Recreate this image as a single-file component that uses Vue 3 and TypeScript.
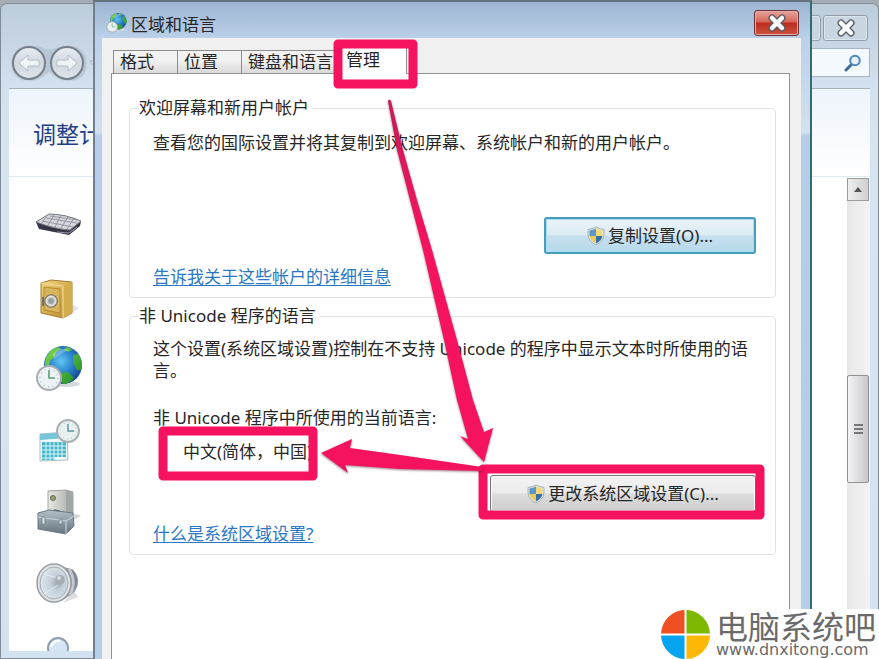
<script setup lang="ts">
import { ref } from 'vue'

const tabs = ['格式', '位置', '键盘和语言', '管理']
const activeTab = ref('管理')
const search = ref('')
const shortcuts = [
  { id: 'keyboard', label: '键盘' },
  { id: 'safe', label: '凭据管理器' },
  { id: 'region', label: '区域和语言' },
  { id: 'calendar', label: '日期和时间' },
  { id: 'device', label: '设备管理器' },
  { id: 'speaker', label: '声音' },
  { id: 'more', label: '更多' },
]
</script>

<template>
  <main class="desktop">
    <svg class="defs" width="0" height="0" aria-hidden="true">
      <defs>
        <radialGradient id="ocean" cx=".45" cy=".4" r=".65">
          <stop offset="0" stop-color="#5fc8f2" />
          <stop offset=".5" stop-color="#2a7fcb" />
          <stop offset="1" stop-color="#123f86" />
        </radialGradient>
        <linearGradient id="land" x1="0" y1="0" x2="1" y2="1">
          <stop offset="0" stop-color="#7fd84a" />
          <stop offset="1" stop-color="#1f8a2c" />
        </linearGradient>
        <linearGradient id="gold" x1="0" y1="0" x2="1" y2="1">
          <stop offset="0" stop-color="#f0d47c" />
          <stop offset="1" stop-color="#b98a28" />
        </linearGradient>
        <linearGradient id="steel" x1="0" y1="0" x2="0" y2="1">
          <stop offset="0" stop-color="#b3bfc7" />
          <stop offset="1" stop-color="#66757f" />
        </linearGradient>
        <linearGradient id="tower" x1="0" y1="0" x2="1" y2="0">
          <stop offset="0" stop-color="#e9e9e4" />
          <stop offset="1" stop-color="#a5a8a6" />
        </linearGradient>
        <radialGradient id="cone" cx=".62" cy=".5" r=".6">
          <stop offset="0" stop-color="#9aa5ad" />
          <stop offset=".4" stop-color="#c3d0da" />
          <stop offset="1" stop-color="#dbe5ec" />
        </radialGradient>
        <linearGradient id="shaft" x1="0" y1="0" x2="0" y2="1">
          <stop offset="0" stop-color="#c81c58" />
          <stop offset=".4" stop-color="#f5125f" />
        </linearGradient>
        <symbol id="globe" viewBox="0 0 48 48">
          <ellipse cx="30" cy="40" rx="15" ry="3" fill="#d5d8db" />
          <circle cx="28" cy="21" r="19" fill="url(#ocean)" />
          <path d="M10 19C11 10 16 5 23 3L26 5 21 8 20 12 15 17 14 24 10 25ZM31 3L37 5 34 8 29 6ZM38 11L43 10C47 15 48 22 46 26L42 26 38 19ZM26 29L33 28 39 34C36 38 32 40 28 40L24 34Z" fill="url(#land)" />
          <path d="M17 10Q25 2 35 6Q28 8 19 15Z" fill="#fff" opacity=".25" />
          <circle cx="14" cy="34" r="12" fill="#edf2f4" stroke="#a6afb5" stroke-width="2" />
          <circle cx="14" cy="34" r="9" fill="none" stroke="#b8c0c5" stroke-width="1.5" stroke-dasharray="1 3.7" />
          <path d="M14 26V34H20" fill="none" stroke="#58a179" stroke-width="1.6" />
        </symbol>
        <symbol id="shield" viewBox="0 0 18 20">
          <path d="M9 1Q5 3 1 3.5V9Q2 16 9 19Q16 16 17 9V3.5Q13 3 9 1Z" fill="#dfe6e6" stroke="#a8b2b5" />
          <path d="M9 2.500Q6 4 2.500 4.500V10H9Z" fill="#5b97c9" />
          <path d="M9 2.500Q12 4 15.500 4.500V10H9Z" fill="#f4d978" />
          <path d="M2.500 10H9V17.500Q3.500 15 2.500 10Z" fill="#eccb5c" />
          <path d="M9 10H15.500Q14.500 15 9 17.500Z" fill="#3a6fa4" />
        </symbol>
        <symbol id="cross" viewBox="0 0 20 18">
          <path d="M5 4L15 14M15 4L5 14" stroke="#575b63" stroke-width="7" stroke-linecap="round" />
          <path d="M5 4L15 14M15 4L5 14" stroke="#fafafa" stroke-width="4.500" stroke-linecap="round" />
        </symbol>
      </defs>
    </svg>

    <section class="panel-window" aria-label="控制面板">
      <header class="panel-header">
        <nav class="history">
          <svg class="history-tray" viewBox="0 0 88 40" aria-hidden="true">
            <path d="M1 21Q2 2 20 2Q29 2 35 5Q39 7 45 5Q51 2 59 2Q76 3 77 21Q76 38 59 38Q49 38 39 29Q29 38 20 38Q2 38 1 21Z" fill="#b7c6d5" stroke="#c9d6e2" />
            <path d="M80 18H88L84 23Z" fill="#e9eff4" stroke="#a6b1bd" />
          </svg>
          <button class="round" type="button" aria-label="后退">
            <svg viewBox="0 0 24 20"><path d="M2 10L11 2V7H22V13H11V18Z" fill="#f0f3f6" stroke="#b5bcc4" /></svg>
          </button>
          <button class="round" type="button" aria-label="前进">
            <svg viewBox="0 0 24 20"><path d="M22 10L13 2V7H2V13H13V18Z" fill="#f0f3f6" stroke="#b5bcc4" /></svg>
          </button>
        </nav>
        <div class="panel-tools">
          <div class="caption">
            <button type="button" aria-label="最大化"></button>
            <button type="button" aria-label="关闭控制面板"><svg viewBox="0 0 20 18"><use href="#cross" /></svg></button>
          </div>
          <label class="search">
            <input v-model="search" type="search" aria-label="搜索控制面板" />
            <svg viewBox="0 0 18 18" aria-hidden="true">
              <path d="M2 16L8 10" stroke="#3f699f" stroke-width="3" stroke-linecap="round" />
              <circle cx="11" cy="6.500" r="4.800" fill="#e4f0fa" stroke="#4d87bd" stroke-width="2" />
            </svg>
          </label>
        </div>
      </header>
      <div class="panel-client">
        <h1>调整计</h1>
        <div class="panel-body">
          <ul class="shortcuts">
            <li v-for="item in shortcuts" :key="item.id">
              <button type="button" :aria-label="item.label">
                <svg v-if="item.id === 'keyboard'" viewBox="0 0 48 48">
                  <path d="M1 22L14 14Q30 14 46 21L45 26 34 35 4 29Z" fill="#353844" />
                  <path d="M1 22L14 14Q30 14 46 21L35 30Q20 29 1 22Z" fill="#d3d6da" stroke="#7b7f87" />
                  <path d="M7 21L38 27M11 18L42 23M15 16L43 20M12 15L7 23M19 15L13 25M26 15L20 27M33 17L26 28M39 18L32 29" stroke="#868b94" stroke-width=".8" fill="none" />
                  <path d="M22 32L34 33 42 27" stroke="#9296b8" fill="none" />
                </svg>
                <svg v-else-if="item.id === 'safe'" viewBox="0 0 48 48">
                  <path d="M35 42L44 36 38 33Z" fill="#e3e3e3" />
                  <path d="M6 11L16 8 37 10 37 41 28 46 6 41Z" fill="url(#gold)" stroke="#a57d2a" />
                  <path d="M28 14L37 10V41L28 46Z" fill="#d3ad4c" />
                  <path d="M6 11L28 14V46" fill="none" stroke="#f5dfa0" />
                  <path d="M9 15L25 17V41L9 38Z" fill="#d8b55a" stroke="#b68b30" />
                  <circle cx="16" cy="29" r="7" fill="#898372" />
                  <circle cx="16" cy="29" r="5" fill="#cfd2d1" stroke="#f1eee0" />
                  <circle cx="16" cy="29" r="3" fill="#9aa0a2" />
                  <path d="M8 25V34" stroke="#767263" stroke-width="2" />
                </svg>
                <svg v-else-if="item.id === 'region'" viewBox="0 0 48 48"><use href="#globe" /></svg>
                <svg v-else-if="item.id === 'calendar'" viewBox="0 0 48 48">
                  <path d="M5 18L32 16 33 44 5 45Z" fill="#f3fafb" stroke="#a9bcc2" />
                  <path d="M5 18L32 16V22L5 24Z" fill="#76c5da" />
                  <path d="M7 26H31V41H20V44H7Z" fill="#45b6c9" />
                  <path d="M7 30H31M7 34H31M7 38H31M7 42H20M11 25V44M15 25V44M19 25V44M23 25V41M27 25V41" stroke="#def5f7" />
                  <circle cx="33" cy="15" r="11" fill="#e9f0f2" stroke="#a8b0b4" stroke-width="2" />
                  <circle cx="33" cy="15" r="8" fill="none" stroke="#b9c2c6" stroke-dasharray="1 3.200" />
                  <path d="M33 8V15H39" fill="none" stroke="#5998a0" stroke-width="1.500" />
                </svg>
                <svg v-else-if="item.id === 'device'" viewBox="0 0 48 48">
                  <path d="M35 34L46 28 41 26 35 29Z" fill="#d3d6d9" />
                  <path d="M13 3L31 2 38 4V33H13Z" fill="url(#tower)" stroke="#a2a5a3" />
                  <path d="M31 2L38 4V33H31Z" fill="#a1a7a7" />
                  <circle cx="18" cy="10" r="2.500" fill="#92a16b" stroke="#656d58" />
                  <path d="M15 27Q19 19 27 25L28 30" fill="none" stroke="#4d565d" stroke-width="2" />
                  <path d="M3 25L14 22 38 25 39 38 31 46 3 41Z" fill="url(#steel)" stroke="#667983" />
                  <path d="M3 29L31 33 39 28M31 33V46" fill="none" stroke="#cbd8df" />
                  <path d="M7 29H10V36H7ZM24 32H27V36H24Z" fill="#d9dedf" stroke="#5d6b73" stroke-width=".6" />
                </svg>
                <svg v-else-if="item.id === 'speaker'" viewBox="0 0 48 48">
                  <path d="M28 43L43 37 39 31Z" fill="#dcdcde" />
                  <path d="M27 7L38 10Q47 20 39 32L29 39Z" fill="#7c858e" stroke="#9ca4ab" />
                  <path d="M34 9Q42 21 35 35" fill="none" stroke="#c3c9ce" stroke-width="3" />
                  <ellipse cx="19" cy="23" rx="17" ry="19" fill="#e1e3e5" stroke="#9a9fa3" stroke-width="1.500" />
                  <ellipse cx="19" cy="23" rx="14" ry="16" fill="url(#cone)" stroke="#a3acb2" />
                  <path d="M8 14L23 18M9 34L23 25" stroke="#e6ecf0" />
                  <circle cx="25" cy="20" r="5" fill="#a7afb5" />
                  <circle cx="24" cy="18" r="2" fill="#d5dade" />
                </svg>
                <svg v-else viewBox="0 0 48 48">
                  <circle cx="23" cy="16" r="10" fill="#d5e6f6" stroke="#8f9dae" stroke-width="2" />
                  <path d="M16 15Q18 8 25 9" stroke="#fff" stroke-width="2" fill="none" />
                </svg>
              </button>
            </li>
          </ul>
          <div class="scrollbar">
            <button type="button" aria-label="向上滚动"><svg viewBox="0 0 10 6"><path d="M0 6L5 0 10 6Z" fill="#555" /></svg></button>
            <div class="thumb"><i></i><i></i><i></i></div>
          </div>
        </div>
      </div>
    </section>

    <section class="dialog" role="dialog" aria-labelledby="dialog-title">
      <header class="titlebar">
        <svg class="title-icon" viewBox="0 0 48 48" aria-hidden="true"><use href="#globe" /></svg>
        <h2 id="dialog-title">区域和语言</h2>
        <button class="close" type="button" aria-label="关闭"><svg viewBox="0 0 20 18"><use href="#cross" /></svg></button>
      </header>
      <div class="dialog-client">
        <div class="tabs" role="tablist">
          <button
            v-for="tab in tabs"
            :key="tab"
            type="button"
            role="tab"
            :aria-selected="activeTab === tab"
            :class="{ active: activeTab === tab }"
            @click="activeTab = tab"
          >{{ tab }}</button>
        </div>
        <div class="page" role="tabpanel">
          <fieldset class="welcome">
            <legend>欢迎屏幕和新用户帐户</legend>
            <p>查看您的国际设置并将其复制到欢迎屏幕、系统帐户和新的用户帐户。</p>
            <button class="command default" type="button">
              <svg viewBox="0 0 18 20" aria-hidden="true"><use href="#shield" /></svg>复制设置(O)...
            </button>
            <a href="#accounts">告诉我关于这些帐户的详细信息</a>
          </fieldset>
          <fieldset class="locale">
            <legend>非 Unicode 程序的语言</legend>
            <p>这个设置(系统区域设置)控制在不支持 Unicode 的程序中显示文本时所使用的语言。</p>
            <p class="current-label">非 Unicode 程序中所使用的当前语言:</p>
            <p class="current">中文(简体，中国)</p>
            <button class="command wide" type="button">
              <svg viewBox="0 0 18 20" aria-hidden="true"><use href="#shield" /></svg>更改系统区域设置(C)...
            </button>
            <a href="#locale">什么是系统区域设置?</a>
          </fieldset>
        </div>
      </div>
    </section>

    <svg class="markup" width="879" height="659" viewBox="0 0 879 659" aria-hidden="true">
      <g fill="none" stroke="#f5125f" stroke-width="9" stroke-linejoin="round">
        <rect x="338" y="44" width="75" height="40" />
        <rect x="163" y="431" width="150" height="45" />
        <rect x="483" y="469" width="277" height="46" />
      </g>
      <path class="arrow" d="M388 101Q389 98 391 101L403 150 417 200 432 250 457 340 473 400 484 432 493 428 484 462 460 436 468 439 457 400 444 340 423 250 397 150Z" fill="url(#shaft)" />
      <path class="arrow" d="M321 453L352 439 350 448 400 455 482 467V471L400 469 345 465 348 473Z" fill="#f5125f" />
    </svg>

    <aside class="brand">
      <svg viewBox="0 0 50 50" aria-hidden="true">
        <path d="M24 24H0A25 25 0 0 1 24 0Z" fill="#ef5023" />
        <path d="M26 24V0A25 25 0 0 1 50 24Z" fill="#7db700" />
        <path d="M24 26V50A25 25 0 0 1 0 26Z" fill="#04a4ee" />
        <path d="M26 26H50A25 25 0 0 1 26 50Z" fill="#fdb805" />
      </svg>
      <div class="brand-text">
        <strong>电脑系统吧</strong>
        <span>www.dnxitong.com</span>
      </div>
    </aside>
  </main>
</template>

<style>
body {
  margin: 0;
}
</style>

<style scoped>
* {
  box-sizing: border-box;
}
.desktop {
  position: relative;
  height: 100vh;
  min-height: 600px;
  overflow: hidden;
  background: #a6adb5;
  color: #262626;
  font: 17px/22px "Noto Sans", "Noto Sans CJK SC", sans-serif;
}
.defs {
  position: absolute;
}
button {
  font: inherit;
  color: inherit;
  margin: 0;
  padding: 0;
}
h1,
h2,
p {
  margin: 0;
  font-weight: 400;
}

/* Control panel behind the dialog */
.panel-window {
  position: absolute;
  inset: 3px 0 0;
  display: flex;
  flex-direction: column;
  padding: 0 8px 7px;
  border: 1px solid #7f8b96;
  border-radius: 7px 7px 0 0;
  background: linear-gradient(#bdccdb 0, #d3e0ed 80px, #d6e4f2 130px, #d3e2f1);
}
.panel-header {
  display: flex;
  justify-content: space-between;
  height: 85px;
  border-bottom: 1px solid #a5b1be;
}
.history {
  position: relative;
  display: flex;
  align-items: flex-start;
  gap: 4px;
  padding: 42px 0 0 3px;
}
.history-tray {
  position: absolute;
  left: 1px;
  top: 39px;
  width: 88px;
  height: 40px;
}
.round {
  position: relative;
  display: grid;
  place-items: center;
  width: 34px;
  height: 34px;
  border: 2px solid #777f88;
  border-radius: 50%;
  background: linear-gradient(#e6ebf0, #d0d8e0 50%, #dde3e9);
}
.round svg {
  width: 24px;
  height: 20px;
}
.panel-tools {
  width: 240px;
  padding-top: 11px;
}
.caption {
  display: flex;
  justify-content: flex-end;
  gap: 2px;
  padding-right: 2px;
}
.caption button {
  display: grid;
  place-items: center;
  width: 45px;
  height: 26px;
  border: 1px solid #929da8;
  border-radius: 3px;
  background: #c9d5e0;
  box-shadow: inset 0 0 0 1px #dae4ed;
}
.caption svg {
  width: 20px;
  height: 18px;
}
.search {
  display: flex;
  align-items: center;
  height: 29px;
  margin-top: 7px;
  padding-right: 7px;
  border: 1px solid #a2b4c5;
  background: #f4f9fd;
}
.search input {
  flex: 1;
  min-width: 0;
  border: 0;
  background: transparent;
}
.search svg {
  width: 18px;
  height: 18px;
}
.panel-client {
  flex: 1;
  min-height: 0;
  display: flex;
  flex-direction: column;
  background: #fff;
}
h1 {
  flex: none;
  height: 88px;
  padding: 30px 24px 0;
  overflow: hidden;
  border-bottom: 1px solid #dceaf2;
  background: linear-gradient(#edf4fb, #fff);
  color: #1f3f86;
  font-size: 23px;
  line-height: 30px;
  white-space: nowrap;
}
.panel-body {
  flex: 1;
  min-height: 0;
  display: flex;
  justify-content: space-between;
  overflow: hidden;
}
.shortcuts {
  margin: 0;
  padding: 11px 0 0 26px;
  list-style: none;
}
.shortcuts li {
  display: flex;
  align-items: center;
  height: 72px;
}
.shortcuts button {
  width: 48px;
  height: 48px;
  border: 0;
  background: none;
}
.shortcuts svg {
  display: block;
  width: 48px;
  height: 48px;
}
.scrollbar {
  width: 23px;
  margin-top: 1px;
  background: linear-gradient(90deg, #e7e7e7, #f3f3f3);
}
.scrollbar button {
  display: grid;
  place-items: center;
  width: 22px;
  height: 23px;
  border: 1px solid #9b9b9b;
  background: linear-gradient(90deg, #efefef, #d0d0d2);
}
.scrollbar svg {
  width: 8px;
  height: 5px;
}
.thumb {
  display: flex;
  flex-direction: column;
  align-items: center;
  justify-content: center;
  gap: 2px;
  width: 22px;
  height: 108px;
  margin-top: 174px;
  border: 1px solid #929296;
  border-radius: 2px;
  background: linear-gradient(90deg, #f3f3f3, #dddddf 50%, #c8c8cc);
}
.thumb i {
  width: 9px;
  height: 2px;
  background: #77777b;
}

/* Region and Language dialog */
.dialog {
  position: absolute;
  inset: 0 67px 0 93px;
  display: flex;
  flex-direction: column;
  padding: 0 9px 0 7px;
  border-top: 2px solid #66727d;
  border-left: 2px solid #737f91;
  border-right: 2px solid #326d70;
  background: linear-gradient(#9db5d2 0, #bbd0e9 36px, #d2e1f1 130px, #b5cde8 134px, #b5cfe9);
}
.titlebar {
  display: flex;
  align-items: flex-start;
  flex: none;
  height: 36px;
  padding: 8px 2px 0 4px;
}
.title-icon {
  width: 21px;
  height: 21px;
  margin-top: 2px;
}
h2 {
  flex: 1;
  margin-left: 4px;
  padding-top: 4px;
  font-size: 17px;
  line-height: 22px;
}
.close {
  display: grid;
  place-items: center;
  width: 45px;
  height: 26px;
  border: 1px solid #68343a;
  border-radius: 3px;
  background: linear-gradient(#e5a49b, #d5665a 46%, #bd2b1d 50%, #ce5340);
  box-shadow: inset 0 0 0 1px #e7aaa4;
}
.close svg {
  width: 20px;
  height: 18px;
}
.dialog-client {
  flex: 1;
  display: flex;
  flex-direction: column;
  padding: 9px 11px 0 9px;
  background: #f0f0f0;
}
.tabs {
  display: flex;
  align-items: flex-end;
  height: 26px;
  padding-left: 2px;
}
.tabs button {
  width: 64px;
  height: 23px;
  padding-left: 6px;
  border: 1px solid #8d8d8f;
  border-width: 1px 0 0 1px;
  background: linear-gradient(#f2f2f2 40%, #d9d9d9);
  line-height: 22px;
  text-align: left;
  white-space: nowrap;
}
.tabs button:nth-child(3) {
  width: 95px;
}
.tabs button.active {
  position: relative;
  width: 71px;
  height: 27px;
  margin-bottom: -1px;
  padding: 0 0 2px 9px;
  border-width: 1px 1px 0;
  background: #fff;
}
.page {
  flex: 1;
  display: flex;
  flex-direction: column;
  gap: 8px;
  padding: 24px 13px 0 17px;
  border: 1px solid #929294;
  border-bottom: 0;
  background: #fff;
}
fieldset {
  display: flow-root;
  min-width: 0;
  margin: 0;
  padding: 14px 19px 9px 23px;
  border: 1px solid #dfe4e8;
  border-radius: 4px;
}
.locale {
  padding-top: 12px;
}
legend {
  margin-left: -14px;
  padding: 0 4px 0 0;
  line-height: 20px;
}
.command {
  display: flex;
  align-items: center;
  justify-content: center;
  gap: 3px;
  width: 212px;
  height: 37px;
  margin: 63px 0 12px auto;
  border: 1px solid #777;
  border-radius: 3px;
  background: linear-gradient(#f3f3f3, #ebebeb 49%, #dcdcdc 51%, #cfcfcf);
  box-shadow: inset 0 0 0 1px #fafafa;
}
.command svg {
  width: 18px;
  height: 20px;
}
.command.default {
  border: 2px solid #4a9cbb;
  background: linear-gradient(#eaf3f8, #dcebf4 49%, #c6dfee 51%, #b6daec);
  box-shadow: inset 0 0 0 1px #a5ddf1;
}
.command.wide {
  width: 266px;
  margin: 12px 0 11px auto;
}
.current-label {
  margin-top: 25px;
}
.current {
  margin-top: 12px;
  padding-left: 30px;
}
a {
  display: table;
  color: #2a78c4;
  text-decoration: underline;
  text-underline-offset: 2px;
}

/* Highlights drawn over both windows */
.markup {
  position: absolute;
  left: 0;
  top: 0;
  pointer-events: none;
}
.arrow {
  filter: drop-shadow(0 1px 1px rgba(60, 0, 20, 0.5));
}

.brand {
  position: absolute;
  right: 0;
  bottom: 0;
  display: flex;
  align-items: center;
  gap: 6px;
  width: 220px;
  height: 50px;
  padding-left: 2px;
  background: #fff;
  color: #6a6a6a;
}
.brand svg {
  flex: none;
  width: 49px;
  height: 49px;
}
.brand-text {
  display: flex;
  flex-direction: column;
}
.brand strong {
  font: 400 32px/32px "Noto Sans CJK SC", sans-serif;
}
.brand span {
  font: 16px/18px "DejaVu Sans", sans-serif;
}
</style>
